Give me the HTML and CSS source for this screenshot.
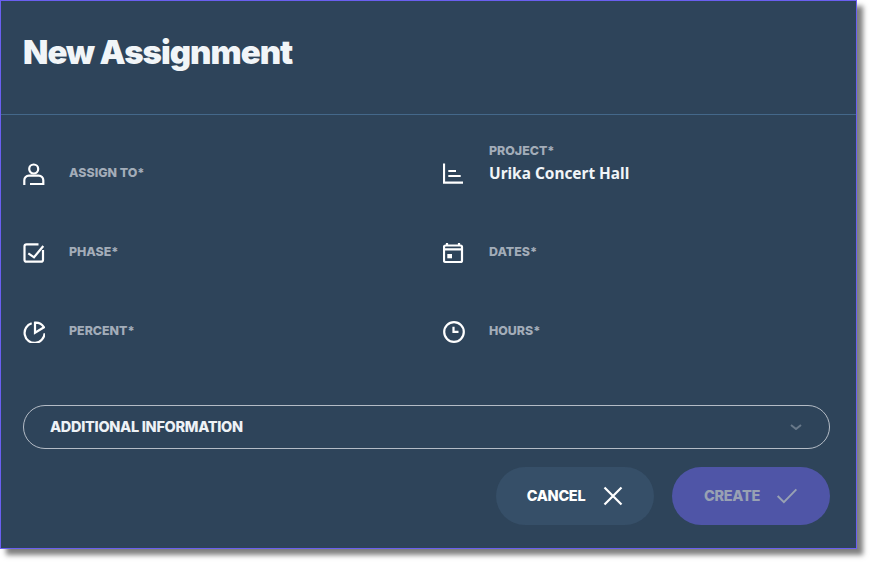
FILE: index.html
```html
<!DOCTYPE html>
<html lang="en">
<head>
    <meta charset="UTF-8">
    <title>New Assignment</title>
    <link rel="stylesheet" href="styles.css">
</head>
<body>
    <div class="dialog">
        <!-- Title -->
        <div class="dialog-header">
            <h1>New Assignment</h1>
        </div>

        <!-- Assignment fields -->
        <div class="fields">
            <div class="field">
                <svg class="icon" viewBox="0 0 22 22"><circle cx="10.700" cy="6" r="4.500"/><path d="M1.300 22v-4.800a4.500 4.500 0 0 1 4.500-4.500h10a4.500 4.500 0 0 1 4.500 4.500V22M7 21h13"/></svg>
                <div class="field-text"><span class="label">ASSIGN TO*</span></div>
            </div>
            <div class="field field-filled">
                <svg class="icon" viewBox="0 0 22 22"><path d="M1 0.500v19.200h19M5.300 8H13M5.300 13h12.400"/></svg>
                <div class="field-text">
                    <span class="label">PROJECT*</span>
                    <span class="value">Urika Concert Hall</span>
                </div>
            </div>
            <div class="field">
                <svg class="icon" viewBox="0 0 22 22"><path d="M15.500 2.300h-12a2 2 0 0 0-2 2v13.400a2 2 0 0 0 2 2H18a2 2 0 0 0 2-2V8"/><path d="M5.300 11.300l5.700 4L20.300 4"/></svg>
                <div class="field-text"><span class="label">PHASE*</span></div>
            </div>
            <div class="field">
                <svg class="icon" viewBox="0 0 22 22"><rect x="1" y="3.500" width="18" height="16.500" rx="1.500"/><path d="M1 7.300h18M4 1v2.500M16 1v2.500"/><rect class="solid" x="4.300" y="12" width="4.700" height="4.300"/></svg>
                <div class="field-text"><span class="label">DATES*</span></div>
            </div>
            <div class="field">
                <svg class="icon" viewBox="0 0 22 22"><path d="M8.700 2.300a10 10 0 1 0 12.900 10"/><path d="M12 1.700v10l9-5.400a10 10 0 0 0-9-4.600z"/></svg>
                <div class="field-text"><span class="label">PERCENT*</span></div>
            </div>
            <div class="field">
                <svg class="icon" viewBox="0 0 22 22"><circle cx="11" cy="11" r="9.800"/><path d="M10.500 5.700v5.200h5"/></svg>
                <div class="field-text"><span class="label">HOURS*</span></div>
            </div>
        </div>

        <!-- Collapsed section -->
        <div class="additional">
            <span>ADDITIONAL INFORMATION</span>
            <svg class="chevron" viewBox="0 0 12 6"><path d="M1 1l5 4 5-4"/></svg>
        </div>

        <!-- Actions -->
        <div class="actions">
            <button type="button" class="btn btn-cancel">
                CANCEL
                <svg viewBox="0 0 20 20"><path d="M1.500 1.500l17 17M18.500 1.500l-17 17"/></svg>
            </button>
            <button type="button" class="btn btn-create">
                CREATE
                <svg viewBox="0 0 24 18"><path d="M1.500 9l7 7L22.500 1.500"/></svg>
            </button>
        </div>
    </div>
</body>
</html>
```

FILE: styles.css
```css
body {
    box-sizing: border-box;
    min-height: 564px;
    margin: 0;
    padding-bottom: 15px;
    background-color: #ffffff;
    font-family: Inter, sans-serif;
}
.dialog {
    box-sizing: border-box;
    width: 857px;
    height: 549px;
    background-color: #2e445a;
    border: 1px solid #6a5ff0;
    box-shadow: 6px 6px 5px rgba(0, 0, 0, 0.5);
}
.dialog-header {
    box-sizing: border-box;
    height: 114px;
    padding: 28px 22px 0;
    border-bottom: 1px solid #44688a;
}
h1 {
    margin: 0;
    color: #f1f5f8;
    font-size: 33px;
    line-height: 46px;
    font-weight: 900;
    letter-spacing: -1px;
}
.fields {
    display: grid;
    grid-template-columns: 420px 1fr;
    grid-auto-rows: 79px;
    padding: 18px 22px 0;
}
.field {
    display: flex;
    align-items: center;
}
.icon {
    flex: none;
    width: 22px;
    height: 22px;
    margin-top: 3px;
    margin-right: 24px;
    fill: none;
    stroke: #ffffff;
    stroke-width: 2.200;
}
.icon .solid {
    fill: #ffffff;
    stroke: none;
}
.field-text {
    display: flex;
    flex-direction: column;
    gap: 5px;
}
/* label floats up once the field has a value */
.field-filled .field-text {
    padding-bottom: 20px;
}
.label {
    color: #a3adb9;
    font-size: 12.400px;
    line-height: 16px;
    font-weight: 800;
}
.value {
    color: #f1f5f8;
    font-family: "Noto Sans", sans-serif;
    font-size: 15.400px;
    line-height: 19px;
    font-weight: 700;
}
.additional {
    display: flex;
    align-items: center;
    justify-content: space-between;
    box-sizing: border-box;
    width: 807px;
    height: 44px;
    margin: 35px 0 0 22px;
    padding: 0 27px 2px 26px;
    border: 1px solid #b4bcc6;
    border-radius: 22px;
    color: #eef2f6;
    font-size: 14.500px;
    font-weight: 800;
    letter-spacing: -0.300px;
}
.chevron {
    width: 12px;
    height: 6px;
    margin-top: 2px;
    fill: none;
    stroke: #69798a;
    stroke-width: 2;
}
.actions {
    display: flex;
    justify-content: flex-end;
    gap: 18px;
    width: 829px;
    margin-top: 18px;
}
.btn {
    display: flex;
    align-items: center;
    justify-content: center;
    gap: 18px;
    width: 158px;
    height: 58px;
    padding: 0;
    border: none;
    border-radius: 29px;
    font-family: Inter, sans-serif;
    font-size: 14.500px;
    font-weight: 800;
    letter-spacing: -0.300px;
    line-height: 16px;
}
.btn svg {
    fill: none;
    stroke-width: 2.200;
}
.btn-cancel {
    background-color: #364f68;
    color: #ffffff;
}
.btn-cancel svg {
    width: 20px;
    height: 20px;
    stroke: #ffffff;
}
.btn-create {
    gap: 16px;
    background-color: #4f55a7;
    color: #98a1b3;
}
.btn-create svg {
    width: 22px;
    height: 16px;
    stroke: #98a1b3;
}
```
